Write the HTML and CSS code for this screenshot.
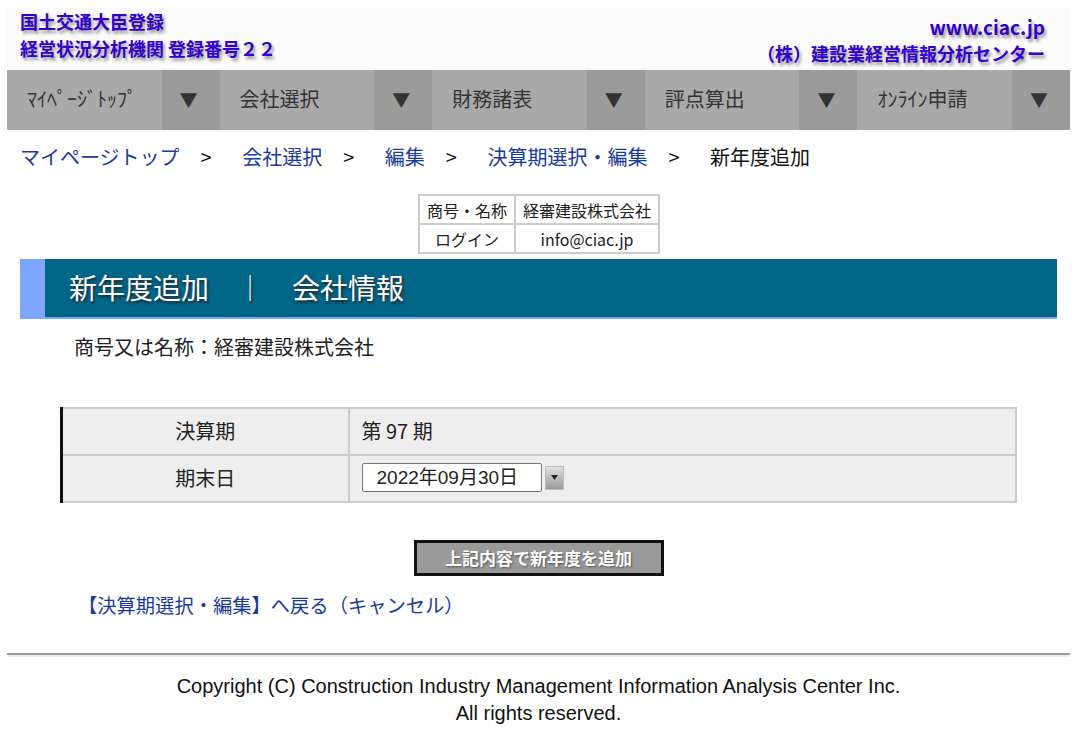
FILE: index.html
```html
<!DOCTYPE html>
<html lang="ja">
<head>
<meta charset="utf-8">
<title>新年度追加</title>
<link rel="stylesheet" href="styles.css">
</head>
<body>
<div class="page">
  <header class="header">
    <div class="h-left">
      <div class="h-line">国土交通大臣登録</div>
      <div class="h-line">経営状況分析機関 登録番号２２</div>
    </div>
    <div class="h-right">
      <div class="h-line url">www.ciac.jp</div>
      <div class="h-line">（株）建設業経営情報分析センター</div>
    </div>
  </header>
  <nav class="nav">
    <div class="nav-item"><span class="nav-label">ﾏｲﾍﾟｰｼﾞﾄｯﾌﾟ</span><span class="nav-arrow">▼</span></div>
    <div class="nav-item"><span class="nav-label">会社選択</span><span class="nav-arrow">▼</span></div>
    <div class="nav-item"><span class="nav-label">財務諸表</span><span class="nav-arrow">▼</span></div>
    <div class="nav-item"><span class="nav-label">評点算出</span><span class="nav-arrow">▼</span></div>
    <div class="nav-item"><span class="nav-label">ｵﾝﾗｲﾝ申請</span><span class="nav-arrow">▼</span></div>
  </nav>
  <div class="crumbs">
    <a class="link">マイページトップ</a><span class="sep">&gt;</span>
    <a class="link">会社選択</a><span class="sep">&gt;</span>
    <a class="link">編集</a><span class="sep">&gt;</span>
    <a class="link">決算期選択・編集</a><span class="sep">&gt;</span>
    <span class="current">新年度追加</span>
  </div>
  <div class="info-wrap">
    <table class="info">
      <tr><td>商号・名称</td><td>経審建設株式会社</td></tr>
      <tr><td>ログイン</td><td>info@ciac.jp</td></tr>
    </table>
  </div>
  <div class="title-bar">
    <div class="title-accent"></div>
    <div class="title-text"><span>新年度追加</span><span class="bar">｜</span><span>会社情報</span></div>
  </div>
  <div class="company">商号又は名称：経審建設株式会社</div>
  <table class="form">
    <tr><th>決算期</th><td>第 97 期</td></tr>
    <tr><th>期末日</th><td><span class="date-row"><span class="date-input">2022年09月30日</span><span class="date-btn"><svg width="9" height="7" viewBox="0 0 9 7"><path d="M1 1h7L4.5 6z" fill="#222"/></svg></span></span></td></tr>
  </table>
  <div class="btn-wrap"><button class="btn">上記内容で新年度を追加</button></div>
  <div class="back"><a class="link">【決算期選択・編集】へ戻る（キャンセル）</a></div>
  <hr class="rule">
  <footer class="footer">
    <div>Copyright (C) Construction Industry Management Information Analysis Center Inc.</div>
    <div>All rights reserved.</div>
  </footer>
</div>
</body>
</html>
```

FILE: styles.css
```css
* { box-sizing: border-box; }
html, body { margin: 0; padding: 0; background: #fff; }
body {
  font-family: "Noto Sans CJK JP", "Noto Sans", sans-serif;
  color: #222;
  padding: 8px 13px 0 7px;
}
.page { width: 1063px; }

.header {
  height: 62px;
  background: #fbfbfb;
  display: flex;
  justify-content: space-between;
  padding: 0 25px 0 13px;
  font-weight: bold;
  color: #3300cc;
  font-size: 18px;
  text-shadow: 2px 3px 3px #999;
}
.h-line { line-height: 27px; height: 27px; }
.h-right { text-align: right; padding-top: 6px; font-size: 18px; }
.h-right .url { font-size: 19px; height: 26px; line-height: 26px; }

.nav {
  display: grid;
  grid-template-columns: repeat(5, 1fr);
  height: 60px;
  background: #a9a9a9;
}
.nav-item { display: flex; align-items: stretch; }
.nav-label {
  flex: 1;
  display: flex;
  align-items: center;
  padding: 0 0 4px 20px;
  font-size: 20px;
  color: #333;
}
.nav-arrow {
  width: 58px;
  background: #9b9b9b;
  display: flex;
  align-items: center;
  justify-content: center;
  color: #333;
  font-size: 18px;
  padding: 0 4px 2px 0;
}

.crumbs {
  padding: 12px 0 0 13px;
  height: 64px;
  font-size: 20px;
  line-height: 30px;
}
.link { color: #1a3a9a; text-decoration: none; }
.sep { color: #111; margin: 0 26px 0 21px; }
.current { color: #111; }

.info-wrap { display: flex; justify-content: center; padding-left: 1px; }
.info {
  border-collapse: collapse;
  border: 2px solid #ccc;
  font-size: 16px;
}
.info td {
  border: 2px solid #ccc;
  height: 29px;
  padding: 0 7px;
  text-align: center;
  line-height: 24px;
}

.title-bar {
  margin: 5px 13px 0 13px;
  height: 60px;
  display: flex;
  border-bottom: 2px solid #7fa6ff;
}
.title-accent { width: 25px; background: #7fa6ff; }
.title-text {
  flex: 1;
  background: #006688;
  color: #fff;
  font-size: 28px;
  display: flex;
  align-items: center;
  padding: 0 0 3px 24px;
  text-shadow: 1px 2px 3px #222;
}
.title-text .bar { margin: 0 29px 0 28px; font-size: 26px; }

.company {
  padding: 13px 0 0 67px;
  height: 88px;
  font-size: 20px;
  line-height: 30px;
}

.form {
  margin-left: 53px;
  width: 957px;
  border-collapse: collapse;
  background: #eee;
  font-size: 20px;
}
.form th, .form td {
  border: 2px solid #ccc;
  height: 47px;
  font-weight: normal;
  padding-bottom: 3px;
}
.form th { width: 287px; text-align: center; }
.form td { padding-left: 12px; }
.form th:first-child { border-left: 3px solid #111; }
.date-row { display: flex; align-items: center; }
.date-input {
  width: 180px;
  height: 29px;
  background: #fff;
  border: 1px solid #777;
  border-radius: 2px;
  font-family: "Liberation Sans", "Noto Sans CJK JP", sans-serif;
  font-size: 19px;
  line-height: 27px;
  padding-left: 14px;
}
.date-btn {
  margin-left: 3px;
  width: 19px;
  height: 24px;
  background: linear-gradient(#e0e0e0, #999);
  border: 1px solid #bbb;
  display: flex;
  align-items: center;
  justify-content: center;
}

.btn-wrap { display: flex; justify-content: center; padding: 37px 0 0 0; }
.btn {
  width: 250px;
  height: 36px;
  background: #999;
  border: 3px solid #111;
  color: #fff;
  font-family: "Noto Sans CJK JP", sans-serif;
  font-weight: bold;
  font-size: 17px;
  text-shadow: 1px 1px 2px #555;
  padding: 0 0 2px 0;
}
.back {
  padding: 14px 0 0 71px;
  font-size: 19.3px;
  line-height: 30px;
  height: 77px;
}
.rule {
  margin: 0;
  border: 0;
  border-top: 2px solid #999;
  border-bottom: 2px solid #eee;
}
.footer {
  text-align: center;
  padding-top: 16px;
  font-family: "Liberation Sans", "Noto Sans", sans-serif;
  font-size: 20px;
  line-height: 27px;
  color: #111;
}
```
